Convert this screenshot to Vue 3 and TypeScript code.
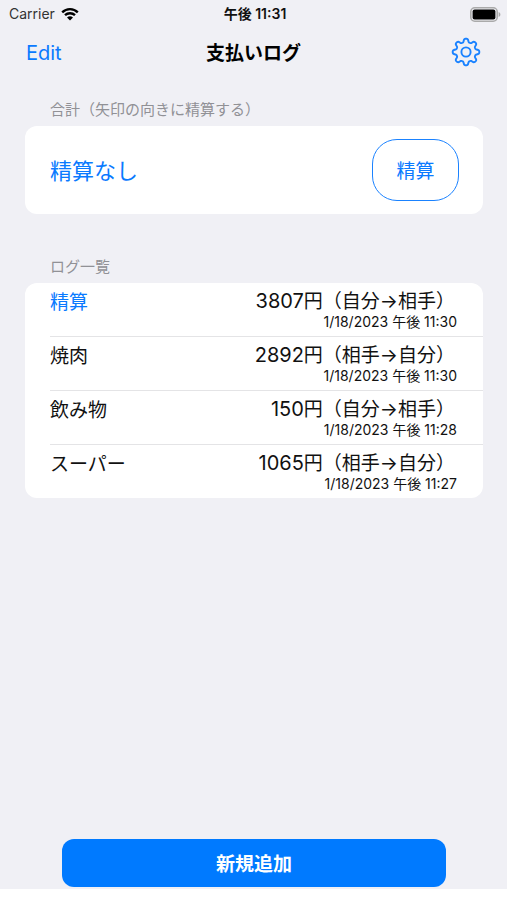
<script setup lang="ts">
interface LogEntry {
  id: number
  title: string
  amount: number
  from: string
  to: string
  date: string
  settled: boolean
}

const me = '自分'
const partner = '相手'

const logs: LogEntry[] = [
  { id: 4, title: '精算', amount: 3807, from: me, to: partner, date: '1/18/2023 午後 11:30', settled: true },
  { id: 3, title: '焼肉', amount: 2892, from: partner, to: me, date: '1/18/2023 午後 11:30', settled: false },
  { id: 2, title: '飲み物', amount: 150, from: me, to: partner, date: '1/18/2023 午後 11:28', settled: false },
  { id: 1, title: 'スーパー', amount: 1065, from: partner, to: me, date: '1/18/2023 午後 11:27', settled: false },
]

// Outline of an eight-toothed gear with rounded teeth, centred in a 30x30 box.
function gearOutline(): string {
  const steps = 192
  const points: string[] = []
  for (let i = 0; i < steps; i++) {
    const angle = (i / steps) * Math.PI * 2
    const wave = Math.tanh(1.8 * Math.cos(8 * angle)) / Math.tanh(1.8)
    const radius = 11.6 + 1.7 * wave
    points.push(`${(15 + radius * Math.cos(angle)).toFixed(2)} ${(15 + radius * Math.sin(angle)).toFixed(2)}`)
  }
  return `M${points.join('L')}Z`
}

const gearPath = gearOutline()
</script>

<template>
  <div class="screen">
    <div class="status">
      <div class="carrier">
        <span>Carrier</span>
        <svg class="wifi" viewBox="0 0 18 14" width="18" height="14" aria-hidden="true">
          <path d="M1.2 5.3a11.2 11.2 0 0 1 15.6 0" />
          <path d="M4 8.2a7.2 7.2 0 0 1 10 0" />
          <path class="dot" d="M6 10.6a4.4 4.4 0 0 1 6 0L9 13.6Z" />
        </svg>
      </div>
      <span class="clock">午後 11:31</span>
      <svg class="battery" viewBox="0 0 31 15" width="31" height="15" aria-hidden="true">
        <rect class="shell" x="0.8" y="0.8" width="26.4" height="13.4" rx="4" />
        <rect x="2.6" y="2.6" width="22.8" height="9.8" rx="2" />
        <path class="tip" d="M28.6 5c2.4 .8 2.4 4.2 0 5Z" />
      </svg>
    </div>

    <header class="nav">
      <button type="button" class="link">Edit</button>
      <h1>支払いログ</h1>
      <button type="button" class="link gear" aria-label="設定">
        <svg viewBox="0 0 30 30" width="30" height="30" aria-hidden="true">
          <path :d="gearPath" />
          <circle cx="15" cy="15" r="4.6" />
        </svg>
      </button>
    </header>

    <main>
      <section>
        <h2>合計（矢印の向きに精算する）</h2>
        <div class="card summary">
          <span class="result">精算なし</span>
          <button type="button" class="settle">精算</button>
        </div>
      </section>

      <section>
        <h2>ログ一覧</h2>
        <ul class="card logs">
          <li v-for="log in logs" :key="log.id">
            <span :class="['title', { settled: log.settled }]">{{ log.title }}</span>
            <div class="detail">
              <span class="amount"><span class="value">{{ log.amount }}</span>円（{{ log.from }}→{{ log.to }}）</span>
              <time>{{ log.date }}</time>
            </div>
          </li>
        </ul>
      </section>
    </main>

    <footer>
      <button type="button" class="add">新規追加</button>
    </footer>
  </div>
</template>

<style>
body {
  margin: 0;
  background: #fff;
}
</style>

<style scoped>
.screen {
  box-sizing: border-box;
  min-height: 100vh;
  display: flex;
  flex-direction: column;
  border-bottom: 11px solid #fff;
  background: #f0f0f5;
  color: #111;
  font-family: Inter, "Noto Sans CJK JP", sans-serif;
  font-size: 19px;
  line-height: 24px;
}

button {
  padding: 0;
  border: 0;
  background: none;
  font: inherit;
  cursor: pointer;
}

.status,
.nav {
  display: grid;
  grid-template-columns: 1fr auto 1fr;
  align-items: center;
}

.status {
  height: 28px;
  padding: 0 6px 0 9px;
  font-size: 14px;
}

.carrier {
  display: flex;
  align-items: center;
  gap: 6px;
  color: #333;
}

.wifi {
  fill: none;
  stroke: #000;
  stroke-width: 2.4;
}

.wifi .dot {
  fill: #000;
  stroke: none;
}

.clock {
  font-weight: 600;
}

.battery {
  justify-self: end;
}

.battery .shell {
  fill: none;
  stroke: #aaa;
  stroke-width: 1.6;
}

.battery .tip {
  fill: #aaa;
}

.nav {
  height: 48px;
  padding: 0 26px;
}

h1 {
  margin: 0;
  padding-top: 4px;
  color: #000;
  font-size: 19px;
  font-weight: 600;
}

.link {
  justify-self: start;
  padding-top: 2px;
  color: #0a7aff;
  font-size: 20px;
}

.gear {
  justify-self: end;
  padding: 0;
}

.gear svg {
  display: block;
  fill: none;
  stroke: #1a82ff;
  stroke-width: 1.9;
  stroke-linejoin: round;
}

main {
  flex: 1;
  display: flex;
  flex-direction: column;
  gap: 40px;
  padding: 22px 24px 40px 25px;
}

h2 {
  margin: 0 0 4px;
  padding: 0 25px;
  color: #919196;
  font-size: 15px;
  font-weight: 400;
}

section + section h2 {
  padding-top: 1px;
}

.card {
  border-radius: 12px;
  background: #fff;
}

.summary {
  display: flex;
  align-items: center;
  justify-content: space-between;
  padding: 13px 24px 13px 25px;
}

.result {
  padding-top: 2px;
  color: #0a7aff;
  font-size: 22px;
}

.settle {
  width: 87px;
  height: 62px;
  padding-top: 4px;
  border: 1px solid #1a82ff;
  border-radius: 25px;
  color: #0a7aff;
}

.logs {
  margin: 0;
  padding: 0 0 0 25px;
  list-style: none;
}

.logs li {
  display: flex;
  justify-content: space-between;
  padding: 6px 26px 5px 0;
}

.logs li + li {
  border-top: 1px solid #e4e4e6;
}

.title {
  padding-top: 2px;
}

.title.settled {
  color: #0a7aff;
}

.detail {
  display: flex;
  flex-direction: column;
  align-items: flex-end;
}

.amount {
  height: 24px;
  padding-right: 2px;
}

.value {
  font-size: 20px;
}

time {
  font-size: 14px;
  line-height: 18px;
}

footer {
  display: flex;
  justify-content: center;
  padding: 0 61px 2px 62px;
}

.add {
  flex: 1;
  height: 48px;
  padding-top: 4px;
  border-radius: 12px;
  background: #007aff;
  color: #fff;
  font-weight: 600;
}
</style>
